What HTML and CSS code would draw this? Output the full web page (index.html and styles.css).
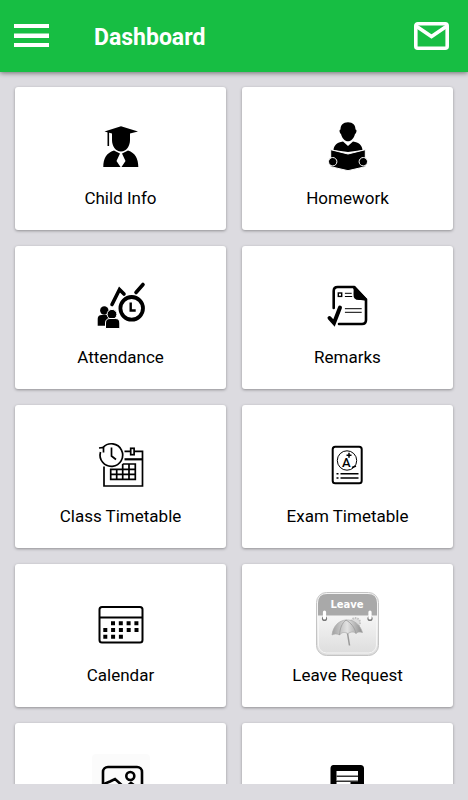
FILE: index.html
```html
<!DOCTYPE html>
<html lang="en">
<head>
<meta charset="utf-8">
<meta name="viewport" content="width=device-width, initial-scale=1">
<title>Dashboard</title>
<link rel="stylesheet" href="styles.css">
</head>
<body>
<header class="topbar">
  <button class="icon-button" type="button" aria-label="Menu">
    <svg width="35" height="30" viewBox="0 0 35 30">
      <path d="M0 3h35v4H0zM0 12.500h35v4.500H0zM0 22h35v4H0z" fill="#fff"/>
    </svg>
  </button>
  <h1>Dashboard</h1>
  <button class="icon-button" type="button" aria-label="Messages">
    <svg width="35" height="30" viewBox="0 0 35 30" fill="none" stroke="#fff" stroke-width="3.6">
      <rect x="1.8" y="2.8" width="31.4" height="24.4" rx="2"/>
      <path d="M2 5l15.500 10.500L33 5"/>
    </svg>
  </button>
</header>

<main class="grid">
  <a class="card" href="#child-info">
    <svg class="icon" viewBox="0 0 63 64">
      <path d="M32 11.300L49 16.500 41 18.500V25c0 6-3.500 11.500-9 11.500S23 31 23 25V18.500L15.500 16.500z"/>
      <path d="M19.300 17v14" stroke="#000" stroke-width="1.600"/>
      <path d="M25 35.500L31 38.500 27.500 46l4 6H14.300c0-8.500 3-14 10.700-16.500zM39 35.500L33 38.500 36.500 46l-4 6h16.800c0-8.500-3-14-10.300-16.500z"/>
    </svg>
    <span>Child Info</span>
  </a>

  <a class="card" href="#homework">
    <svg class="icon" viewBox="0 0 63 64">
      <path d="M32 7.300c5 0 7.500 3 7.500 7.200 2 .5.500 4-.5 4.500-1 4.500-4 7.300-7 7.300S26 23.500 25 19c-1-.5-2.500-4-.5-4.500 0-4.200 2.500-7.200 7.500-7.200z"/>
      <path d="M27 26.500l5 4.500 5-4.500c6 1 9 3.500 9.500 8.500L32 37 17.500 35c.5-5 3.500-7.500 9.500-8.500z"/>
      <path d="M14.700 34.700L32 39l17.300-4.300v17L32 55.700l-17.300-4z" stroke="#fff" stroke-width="1"/>
      <circle cx="16.700" cy="46.700" r="4.200" stroke="#fff"/>
      <circle cx="47.300" cy="46.700" r="4.200" stroke="#fff"/>
    </svg>
    <span>Homework</span>
  </a>

  <a class="card" href="#attendance">
    <svg class="icon" viewBox="0 0 63 64">
      <g fill="none" stroke="#000" stroke-linecap="round">
        <path d="M23 30.500L30.500 15.500 35 20" stroke-width="3.600"/>
        <path d="M47 18.500L54 10.500" stroke-width="3.600"/>
        <circle cx="42.700" cy="34.300" r="11.300" stroke-width="3.800"/>
        <path d="M41.700 28.500V36.500h5" stroke-width="2.400" stroke-linecap="butt"/>
      </g>
      <circle cx="15.300" cy="36.500" r="4.200"/>
      <path d="M8.700 51.700V45q0-4 4-4h5q4 0 4 4v6.700z"/>
      <g stroke="#fff">
        <circle cx="23" cy="40.300" r="4.900"/>
        <path d="M16.500 54.500V49q0-4.500 4.500-4.500h5.300q4.500 0 4.500 4.500v5.500z"/>
      </g>
    </svg>
    <span>Attendance</span>
  </a>

  <a class="card" href="#remarks">
    <svg class="icon" viewBox="0 0 63 64">
      <g fill="none" stroke="#000" stroke-width="2.600" stroke-linecap="round">
        <path d="M17.700 34V17q0-4 4-4H38L50 25.500V46q0 4-4 4H23"/>
        <path d="M13.500 44l4.500 5 6-15.500" stroke-width="4"/>
        <path d="M29.300 34.700h16M29.300 38.300h16M29.300 19.300h6M29.300 22.500h6.500" stroke-width="1"/>
        <rect x="22.300" y="19" width="3.400" height="3.400" stroke-width="1.400"/>
      </g>
      <path d="M36.500 12h2.500L51 25v2.500q-3-2-8-1.500-6 0-5.500-6 .5-5-1-8z"/>
    </svg>
    <span>Remarks</span>
  </a>

  <a class="card" href="#class-timetable">
    <svg class="icon" viewBox="0 0 63 64">
      <g fill="none" stroke="#000" stroke-width="1.700">
        <path d="M14 14.500A11.300 11.300 0 1 1 11.500 19"/>
        <path d="M10 15l4.500-.5V19.500"/>
        <path d="M22.500 14.500V23l4.500 3.500"/>
        <path d="M15 33.500V53h38.500V18.300H45M41.700 18.300H35.500"/>
        <path d="M35.500 26.300h18" stroke-width="2.200"/>
        <rect x="41.700" y="15.300" width="3.400" height="6.400"/>
        <path d="M33.700 31h12.600v15.400H21.700V36.300h24.600M21.700 41.300h24.600M27.700 36.300v10M33.700 31v15.400M40 31v15.400"/>
      </g>
    </svg>
    <span>Class Timetable</span>
  </a>

  <a class="card" href="#exam-timetable">
    <svg class="icon" viewBox="0 0 63 64">
      <g fill="none" stroke="#000">
        <rect x="16.700" y="13.700" width="29" height="36.600" rx="2.500" stroke-width="2"/>
        <circle cx="31" cy="27.500" r="9.700" stroke-width="1"/>
        <path d="M24.500 40.700h18M24.500 45h18M20.500 40.700h2M20.500 45h2" stroke-width="1.500"/>
        <path d="M36 34.500l4-1.500" stroke-width="1.500"/>
        <path d="M33 19.700v5M30.500 22.200h5" stroke-width="1.500"/>
      </g>
      <text class="grade" x="26" y="34">A</text>
    </svg>
    <span>Exam Timetable</span>
  </a>

  <a class="card" href="#calendar">
    <svg class="icon" viewBox="0 0 63 64">
      <g fill="none" stroke="#000">
        <rect x="10.500" y="15" width="43" height="35.500" rx="2.500" stroke-width="2"/>
        <path d="M10 25.500h44" stroke-width="2"/>
        <g stroke-width="4" stroke-dasharray="4 3.800">
          <path d="M22 31.300h28"/>
          <path d="M14.300 38h36"/>
          <path d="M14.300 44.700h20"/>
        </g>
      </g>
    </svg>
    <span>Calendar</span>
  </a>

  <a class="card" href="#leave-request">
    <svg class="icon" viewBox="0 0 63 64">
      <defs>
        <linearGradient id="sheet" x1="0" y1="0" x2="0" y2="1">
          <stop offset="0.400" stop-color="#f4f4f4"/>
          <stop offset="1" stop-color="#dcdcdc"/>
        </linearGradient>
        <linearGradient id="canopy">
          <stop offset="0" stop-color="#a0a0a0"/>
          <stop offset="0.500" stop-color="#e2e2e2"/>
          <stop offset="1" stop-color="#8c8c8c"/>
        </linearGradient>
      </defs>
      <rect x="0.500" y="0.500" width="62" height="63" rx="10" fill="url(#sheet)" stroke="#c4c4c4"/>
      <rect x="2.500" y="3" width="58" height="58" rx="8" fill="none" stroke="#f6f6f6"/>
      <path d="M2 23.500V11q0-9 9-9h41q9 0 9 9v12.500z" fill="#a9a9a9"/>
      <circle cx="8.500" cy="26.500" r="2.600" fill="#777"/>
      <circle cx="54" cy="26.500" r="2.600" fill="#777"/>
      <path d="M8.500 20v6M54 20v6" stroke="#fff" stroke-width="3.200" stroke-linecap="round"/>
      <circle cx="39.500" cy="30.500" r="4.500" fill="#ddd" stroke="#c2c2c2" stroke-width="2" stroke-dasharray="1.500 1"/>
      <path d="M31 38l2.500 15.500" stroke="#999" stroke-width="1.500"/>
      <path d="M16 43c1-9 7-14.500 14-15 8-.5 14 4.500 16.500 12.500-3-1-5-.5-6.500 1-2-2-5.500-2-8 .2-3-2-6.500-1.500-8.500 1.300-2.500-1.500-5-1.500-7.500 0z" fill="url(#canopy)" stroke="#aaa" stroke-width="0.700"/>
      <path d="M30 28c-4 3-6 8-6.500 15M30 28c5 3 8.500 7 10 13.500" fill="none" stroke="#999" stroke-width="0.800"/>
      <text class="leave" x="31" y="16">Leave</text>
    </svg>
    <span>Leave Request</span>
  </a>

  <a class="card" href="#gallery" aria-label="Gallery">
    <svg class="icon" viewBox="0 0 63 64">
      <rect x="3" y="3" width="58" height="58" rx="4" fill="#fbfbfb"/>
      <g fill="none" stroke="#000" stroke-width="2.600">
        <rect x="14" y="16" width="39" height="34" rx="5"/>
        <circle cx="41.300" cy="25" r="4"/>
        <path d="M15 33l6-2.500 5-2.500 10 9 6-5 11 8"/>
      </g>
    </svg>
  </a>

  <a class="card" href="#messages" aria-label="Messages">
    <svg class="icon" viewBox="0 0 63 64">
      <path d="M17.500 14h27q3.500 0 3.500 3.500v26q0 3.500-3.500 3.500H24l-9.500 8V17.500q0-3.500 3-3.500z"/>
      <path d="M20.500 20h21.500v10H20.500zM20.500 31h14v3h-14z" fill="#fff"/>
      <path d="M20.500 25.200h21.500M20.500 30.300h21.500" stroke="#333" stroke-width="1.600"/>
    </svg>
  </a>
</main>
</body>
</html>
```

FILE: styles.css
```css
* {
  box-sizing: border-box;
}

body {
  margin: 0;
  height: 100vh;
  display: flex;
  flex-direction: column;
  background-color: #dcdbe0;
  color: #000;
  font-family: Roboto, "Liberation Sans", sans-serif;
}

.topbar {
  flex: none;
  height: 72px;
  padding: 0 19px 0 14px;
  display: flex;
  align-items: center;
  background-color: #17be43;
  box-shadow: 0 1px 5px rgba(0, 0, 0, 0.5);
  z-index: 1;
}

.topbar h1 {
  flex: 1;
  margin: 4px 0 0 45px;
  font-size: 23px;
  line-height: 28px;
  font-weight: 700;
  color: #fff;
}

.icon-button {
  padding: 0;
  border: 0;
  background: none;
  cursor: pointer;
}

.icon-button svg {
  display: block;
}

/* the list scrolls under the bar and stops short of the bottom edge */
.grid {
  flex: 1;
  min-height: 0;
  margin-bottom: 16px;
  padding: 15px 15px 0;
  display: grid;
  grid-template-columns: 1fr 1fr;
  grid-auto-rows: 143px;
  gap: 16px;
  overflow: auto;
  scrollbar-width: none;
}

.card {
  padding-top: 28px;
  display: flex;
  flex-direction: column;
  align-items: center;
  gap: 9px;
  border-radius: 3px;
  background-color: #fff;
  box-shadow: 0 1px 3px rgba(0, 0, 0, 0.35);
  color: inherit;
  font-size: 17px;
  line-height: 20px;
  text-decoration: none;
}

.icon {
  flex: none;
  width: 63px;
  height: 64px;
}

.grade {
  font-size: 13px;
  font-weight: 500;
}

.leave {
  font-family: "DejaVu Sans", sans-serif;
  font-size: 10px;
  font-weight: 700;
  fill: #fff;
  text-anchor: middle;
}
```
